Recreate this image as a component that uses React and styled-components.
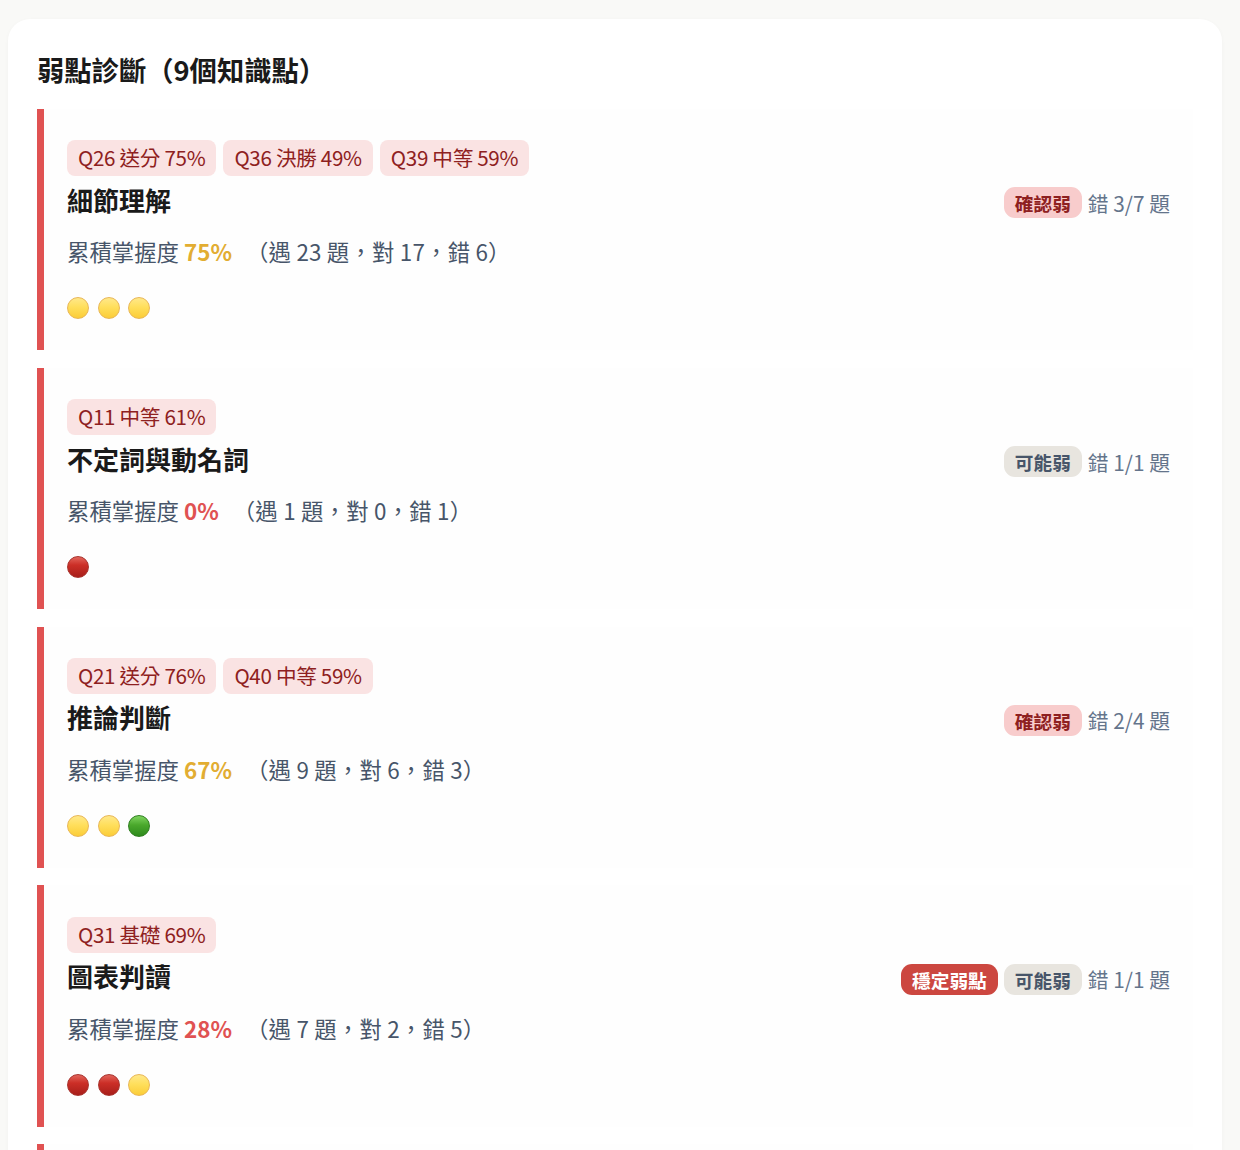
import React from "react";
import styled, { createGlobalStyle } from "styled-components";

const Global = createGlobalStyle`
  html, body { margin: 0; padding: 0; background: #f9f9f7; }
  body { font-family: "Noto Sans CJK TC", "Noto Sans", sans-serif; height: 1150px; overflow: hidden; }
`;
const Page = styled.div`
  padding: 19px 18px 0 8px;
`;
const Card = styled.section`
  background: #fff;
  border-radius: 22px;
  padding: 28px 29px 0;
  box-shadow: 0 1px 4px rgba(0, 0, 0, 0.03);
`;
const Heading = styled.h2`
  margin: 0 0 17px;
  font-size: 27.3px;
  line-height: 45px;
  font-weight: 700;
  color: #1a1a1a;
`;
const List = styled.div`
  display: flex;
  flex-direction: column;
  gap: 17.4px;
`;
const Item = styled.article`
  height: 241.4px;
  box-sizing: border-box;
  border-left: 7px solid #e05252;
  background: #fefefe;
  padding: 31.3px 23px 0 23px;
`;
const Tags = styled.div`
  display: flex;
  gap: 7px;
`;
const Tag = styled.span`
  height: 36px;
  line-height: 35px;
  padding: 0 11px;
  border-radius: 8px;
  background: #fae3e3;
  color: #8e2020;
  font-size: 20.6px;
  letter-spacing: -0.3px;
  white-space: nowrap;
`;
const Head = styled.div`
  display: flex;
  align-items: center;
  justify-content: space-between;
  height: 46px;
`;
const Title = styled.h3`
  margin: 0;
  font-size: 26px;
  font-weight: 700;
  color: #1a1a1a;
`;
const Meta = styled.div`
  display: flex;
  align-items: center;
  gap: 6px;
  margin-top: 7px;
`;
const Badge = styled.span`
  height: 31px;
  line-height: 31px;
  padding: 0 11px;
  border-radius: 11px;
  font-size: 18.7px;
  font-weight: 700;
  white-space: nowrap;
  background: ${(p) => ({ confirm: "#f8cccc", maybe: "#e8e5df", stable: "#cc4740" }[p.$kind])};
  color: ${(p) => ({ confirm: "#8e2020", maybe: "#475569", stable: "#fff" }[p.$kind])};
`;
const Wrong = styled.span`
  font-size: 20.8px;
  color: #64748b;
  white-space: nowrap;
`;
const Detail = styled.p`
  margin: 9px 0 0;
  font-size: 22.4px;
  line-height: 40px;
  color: #475569;
  white-space: pre;
`;
const Pct = styled.strong`
  font-weight: 700;
  color: ${(p) => (p.$low ? "#e05252" : "#e2ad32")};
`;
const Rest = styled.span`
  margin-left: 4px;
  letter-spacing: 0.2px;
`;
const Dots = styled.div`
  display: flex;
  gap: 8.5px;
  margin-top: 26px;
`;
const palette = {
  y: "linear-gradient(180deg, #ffe88a 0%, #ffdf5c 45%, #fbcd38 100%)",
  r: "linear-gradient(180deg, #e2655c 0%, #cc2f27 40%, #a81e1a 100%)",
  g: "linear-gradient(180deg, #7fd45f 0%, #4aa82c 45%, #2e8a1c 100%)",
};
const edge = { y: "#e9b756", r: "#a8332e", g: "#2f7f20" };
const Dot = styled.span`
  width: 22px;
  height: 22px;
  box-sizing: border-box;
  border-radius: 50%;
  background: ${(p) => palette[p.$c]};
  border: 1px solid ${(p) => edge[p.$c]};
`;

const items = [
  { tags: ["Q26 送分 75%", "Q36 決勝 49%", "Q39 中等 59%"], title: "細節理解", badges: [["confirm", "確認弱"]], wrong: "錯 3/7 題", pct: "75%", low: false, rest: "（遇 23 題，對 17，錯 6）", dots: "yyy" },
  { tags: ["Q11 中等 61%"], title: "不定詞與動名詞", badges: [["maybe", "可能弱"]], wrong: "錯 1/1 題", pct: "0%", low: true, rest: "（遇 1 題，對 0，錯 1）", dots: "r" },
  { tags: ["Q21 送分 76%", "Q40 中等 59%"], title: "推論判斷", badges: [["confirm", "確認弱"]], wrong: "錯 2/4 題", pct: "67%", low: false, rest: "（遇 9 題，對 6，錯 3）", dots: "yyg" },
  { tags: ["Q31 基礎 69%"], title: "圖表判讀", badges: [["stable", "穩定弱點"], ["maybe", "可能弱"]], wrong: "錯 1/1 題", pct: "28%", low: true, rest: "（遇 7 題，對 2，錯 5）", dots: "rry" },
  { tags: [], title: "", badges: [], wrong: "", pct: "", low: false, rest: "", dots: "" },
];

export default function App() {
  return (
    <Page>
      <Global />
      <Card>
        <Heading>弱點診斷（9個知識點）</Heading>
        <List>
          {items.map((it, i) => (
            <Item key={i}>
              <Tags>{it.tags.map((t) => <Tag key={t}>{t}</Tag>)}</Tags>
              {it.title && (
                <>
                  <Head>
                    <Title>{it.title}</Title>
                    <Meta>
                      {it.badges.map(([k, b]) => <Badge key={b} $kind={k}>{b}</Badge>)}
                      <Wrong>{it.wrong}</Wrong>
                    </Meta>
                  </Head>
                  <Detail>累積掌握度 <Pct $low={it.low}>{it.pct}</Pct>{"  "}<Rest>{it.rest}</Rest></Detail>
                  <Dots>{[...it.dots].map((c, j) => <Dot key={j} $c={c} />)}</Dots>
                </>
              )}
            </Item>
          ))}
        </List>
      </Card>
    </Page>
  );
}
